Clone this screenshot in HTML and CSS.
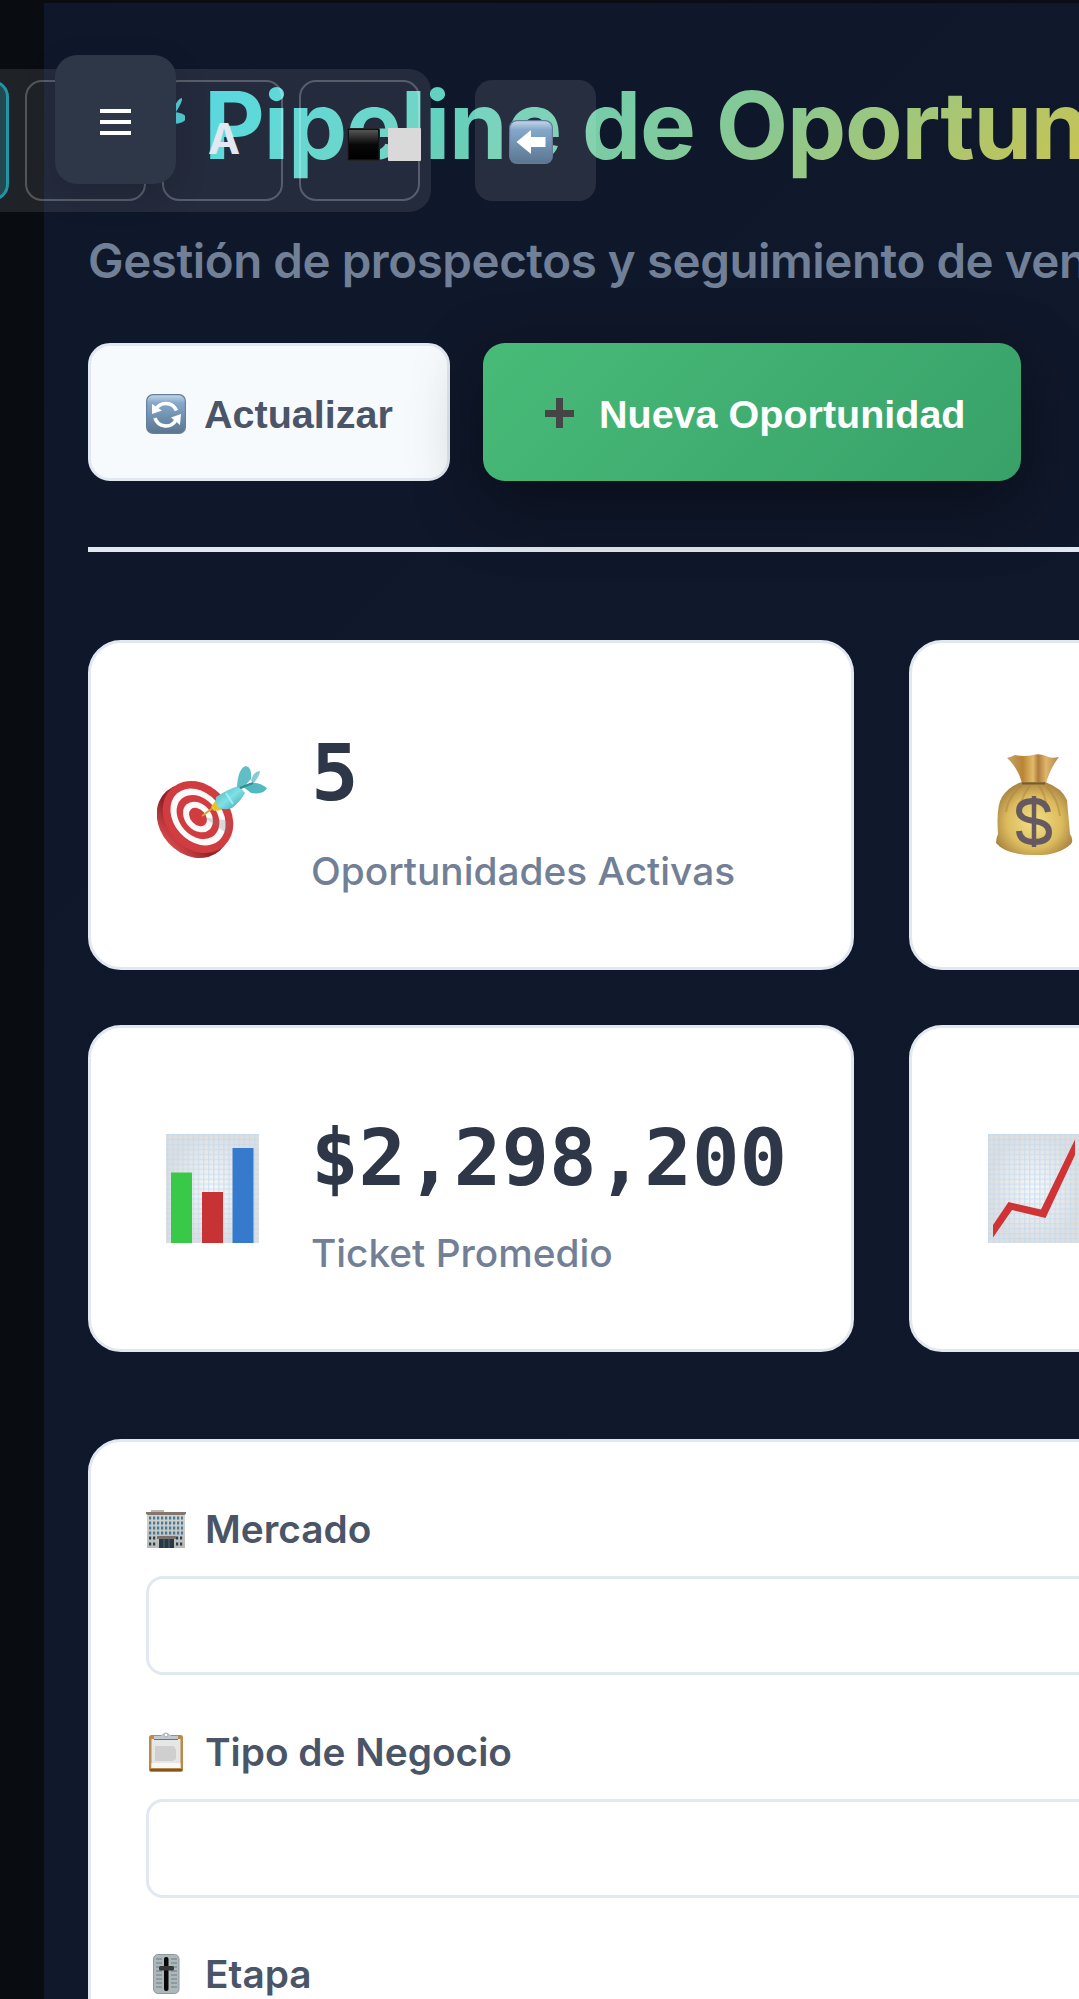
FILE: index.html
```
<!DOCTYPE html>
<html lang="es">
<head>
<meta charset="utf-8">
<title>Pipeline de Oportunidades</title>
<link rel="stylesheet" href="styles.css">
</head>
<body>
<svg class="defs" width="0" height="0" aria-hidden="true">
  <defs>
    <linearGradient id="key" x1="0" y1="0" x2="0" y2="1"><stop offset="0" stop-color="#c3d5e6"/><stop offset=".2" stop-color="#86a9cb"/><stop offset=".55" stop-color="#7192b2"/><stop offset="1" stop-color="#5c7690"/></linearGradient>
    <linearGradient id="jet" x1="0" y1="0" x2="0" y2="1"><stop offset="0" stop-color="#555"/><stop offset=".5" stop-color="#080808"/><stop offset="1" stop-color="#000"/></linearGradient>
    <radialGradient id="paper"><stop offset="0" stop-color="#f8f8f8"/><stop offset="1" stop-color="#dedede"/></radialGradient>
    <pattern id="grid" width="5.1" height="4.95" patternUnits="userSpaceOnUse"><path d="M.7 0V5M0 .7H5.1" stroke="#bddaf2" stroke-width="1" opacity=".8" fill="none"/></pattern>
    <radialGradient id="gold" cx=".5" cy=".55" r=".6"><stop offset="0" stop-color="#f3e083"/><stop offset=".6" stop-color="#dcbb5e"/><stop offset="1" stop-color="#a17a3d"/></radialGradient>
    <linearGradient id="neck"><stop offset="0" stop-color="#c9a36c"/><stop offset=".3" stop-color="#b98436"/><stop offset=".5" stop-color="#e0bc68"/><stop offset=".6" stop-color="#b07c3c"/><stop offset=".75" stop-color="#dfb66a"/><stop offset="1" stop-color="#b08754"/></linearGradient>
    <linearGradient id="dart" x1="0" y1="0" x2="1" y2="1"><stop offset="0" stop-color="#4db3ba"/><stop offset=".5" stop-color="#7fe0e6"/><stop offset="1" stop-color="#3b9aa4"/></linearGradient>
    <linearGradient id="rim"><stop offset="0" stop-color="#d9474b"/><stop offset=".35" stop-color="#8f2529"/><stop offset="1" stop-color="#b03034"/></linearGradient>
    <linearGradient id="wall" x1="0" y1="0" x2="0" y2="1"><stop offset="0" stop-color="#d8d4cc"/><stop offset="1" stop-color="#b9bab8"/></linearGradient>
  </defs>
</svg>

<main class="page">
  <header class="header">
    <h1 class="title"><svg class="title-icon" viewBox="0 0 97 80"><g fill="#45c9d3"><path d="M86 23Q90 13 94 13Q95 16 88 27Z"/><ellipse cx="85" cy="33" rx="13" ry="6"/></g></svg><span class="title-text">Pipeline de Oportunidades</span></h1>
    <p class="subtitle">Gestión de prospectos y seguimiento de ventas</p>
    <div class="actions">
      <button class="btn btn-light">
        <svg class="btn-icon" viewBox="0 0 40 40"><rect width="40" height="40" rx="7" fill="#64809d"/><rect x="1.2" y="1.2" width="37.6" height="37.6" rx="6" fill="url(#key)"/><g fill="none" stroke="#fff" stroke-width="3.6"><path d="M9.500 16A11.500 11.500 0 0 1 30.500 16.500"/><path d="M9 24A11.500 11.500 0 0 0 30 26"/></g><path d="M6 10L16 16.500L6 20ZM35 20L34 31L25 23.500Z" fill="#fff"/></svg>
        <span>Actualizar</span>
      </button>
      <button class="btn btn-green">
        <svg class="btn-icon" viewBox="0 0 40 40"><path d="M16 4h7v12h11v7H23v11h-7V23H5v-7h11z" fill="#454545"/></svg>
        <span>Nueva Oportunidad</span>
      </button>
    </div>
  </header>

  <section class="stats">
    <article class="stat">
      <svg class="stat-icon" viewBox="0 0 111 110">
        <ellipse cx="36" cy="71" rx="33" ry="40" transform="rotate(-42 36 71)" fill="url(#rim)"/>
        <g transform="rotate(-42 41 67)"><ellipse cx="41" cy="67" rx="32" ry="39" fill="#d13c41"/><ellipse cx="41" cy="67" rx="24" ry="31.500" fill="#fafafa"/><ellipse cx="41" cy="67" rx="18.500" ry="24.500" fill="#d13c41"/><ellipse cx="41" cy="67" rx="13" ry="17" fill="#fafafa"/><ellipse cx="41" cy="67" rx="7.500" ry="10.500" fill="#d13c41"/></g>
        <path d="M46 67L74 71L71 84L62 78Z" fill="#777" opacity=".25"/>
        <path d="M45 66L60 55" stroke="#d9a62a" stroke-width="2"/><path d="M54 57L59 50L65 60L57 61Z" fill="#e7c229"/>
        <path d="M59 47Q71 39 82 36L88 43Q83 52 75 58Q66 61 61 57Q58 51 59 47Z" fill="url(#dart)"/>
        <path d="M69 43L76 54" stroke="#9cf0f3" stroke-width="2"/>
        <path d="M80 37Q81 18 89 16Q95 17 94 29L85 39Z" fill="#60bec4"/><path d="M94 30Q97 21 103 21Q103 26 96 34Z" fill="#85cdd0"/><path d="M85 36Q99 29 110 38Q107 45 94 43Z" fill="#51b9c0"/><path d="M83 38L96 33" stroke="#348c95" stroke-width="2"/>
      </svg>
      <div class="stat-body"><div class="stat-value">5</div><div class="stat-label label-first">Oportunidades Activas</div></div>
    </article>
    <article class="stat">
      <svg class="stat-icon" viewBox="0 0 111 110">
        <path d="M29 8Q33 7 37 5Q47 7 55 5Q61 3 68 6Q73 9 81 7Q73 17 68 33H44Q40 18 29 8Z" fill="url(#neck)"/>
        <path d="M44 32H67Q84 38 89 50L92 84Q96 90 93 94Q80 106 56 105Q28 105 18 93Q18 88 20 84Q18 56 24 47Q31 36 44 32Z" fill="url(#gold)"/>
        <path d="M44 33.500H67" stroke="#765a37" stroke-width="2"/>
        <path d="M43 36Q30 47 28 62M52 36Q45 44 43 54M61 36Q66 43 68 52M69 37Q80 49 82 66" stroke="#ae8442" stroke-width="2" opacity=".5" fill="none"/>
        <path d="M56 46V97" stroke="#655a60" stroke-width="4.500"/><path d="M70 62Q68 51 56 51Q41 51 41 61Q41 69 56 71Q71 73 71 82Q71 92 56 92Q42 92 41 81" fill="none" stroke="#655a60" stroke-width="6"/>
      </svg>
      <div class="stat-body"></div>
    </article>
    <article class="stat">
      <svg class="stat-icon" viewBox="0 0 111 110"><rect x="9" y="0" width="93" height="109" fill="url(#paper)"/><rect x="9" y="0" width="93" height="109" fill="url(#grid)"/><path d="M14 38.500H35V109H14z" fill="#37c947"/><path d="M45 58H66V109H45z" fill="#c73335"/><path d="M75.500 14H96.500V109H75.500z" fill="#367ace"/></svg>
      <div class="stat-body"><div class="stat-value">$2,298,200</div><div class="stat-label">Ticket Promedio</div></div>
    </article>
    <article class="stat">
      <svg class="stat-icon" viewBox="0 0 111 110"><rect x="10" y="0" width="93" height="109" fill="url(#paper)"/><rect x="10" y="0" width="93" height="109" fill="url(#grid)"/><path d="M15 91L30.500 68L63 75.500L97 5.500V21L67.500 84L34 76L15 103.500Z" fill="#d03336"/></svg>
      <div class="stat-body"></div>
    </article>
  </section>

  <section class="filters">
    <div class="field">
      <label class="field-label"><svg class="field-icon" viewBox="0 0 40 40"><path d="M5 1H18V4H5z" fill="#bcb5b0"/><path d="M1 5H39V39H1z" fill="url(#wall)"/><path d="M0 3H40V5L38 6H2L0 5z" fill="#85766d"/><g stroke="#3f7ca0" stroke-width="3.200" stroke-dasharray="2.200 1.800"><path d="M3 9H37M3 14H37M3 19H37M3 24H37"/></g><path d="M3 29H10M3 35H10M30 29H38M30 35H38" stroke="#263f55" stroke-width="3.200" stroke-dasharray="2.200 1.800"/><path d="M11 27H30V30H11z" fill="#7b706c"/><path d="M13 30H28V39H13z" fill="#253a46"/><path d="M18 30V39M23 30V39" stroke="#5b6970"/></svg><span>Mercado</span></label>
      <div class="select"></div>
    </div>
    <div class="field">
      <label class="field-label"><svg class="field-icon" viewBox="0 0 40 40"><rect x="3" y="3" width="34" height="37" rx="2.500" fill="#ba8a48"/><path d="M4 37H36V39H4z" fill="#835523"/><path d="M5.500 7H34.500V36H5.500z" fill="#e6e6e6"/><path d="M5.500 31H34.500V36H5.500z" fill="#f8f8f8"/><path d="M9 14H28L30 18V27L27 29H9z" fill="#cfcfcf"/><path d="M8 4H15Q16 1 20 1Q24 1 25 4H32V7.500H8z" fill="#c3c9ce"/><path d="M8 7.500H32" stroke="#7b7066"/><circle cx="20" cy="3" r="2" fill="#fff" stroke="#9aa8b4"/></svg><span>Tipo de Negocio</span></label>
      <div class="select"></div>
    </div>
    <div class="field">
      <label class="field-label"><svg class="field-icon" viewBox="0 0 40 40"><rect x="7.500" y=".5" width="25.500" height="39" rx="4.500" fill="#adb8bb" stroke="#8e999c"/><path d="M10 5H16M10 9H16M10 13H16M10 17H16M10 21H16M10 25H16M10 29H16M10 33H16M25 5H31M25 9H31M25 13H31M25 17H31M25 21H31M25 25H31M25 29H31M25 33H31" stroke="#717e82" stroke-width="1.200"/><rect x="18" y="3" width="4.500" height="34" rx="2" fill="#090909"/><rect x="13" y="12" width="15" height="4.500" rx="1.500" fill="#343839"/></svg><span>Etapa</span></label>
      <div class="select"></div>
    </div>
  </section>
</main>

<nav class="toolbar">
  <button class="tool tool-active"></button>
  <button class="tool"></button>
  <button class="tool tool-contrast"><span class="tool-letter">A</span></button>
  <button class="tool tool-squares"><svg width="75" height="34" viewBox="0 0 75 34"><rect x=".5" y=".5" width="32" height="32" rx="1" fill="#111" stroke="#252525"/><rect x="2" y="2" width="29" height="29" fill="url(#jet)"/><rect x="41" y="0" width="33" height="33" rx="1" fill="#d9d9d9"/></svg></button>
</nav>
<button class="back"><svg width="44" height="44" viewBox="0 0 44 44"><rect width="44" height="44" rx="8" fill="#607c99"/><rect x="1.200" y="1.200" width="41.600" height="41.600" rx="7" fill="url(#key)"/><path d="M7.500 22L22 10V17H36.500V27H22V34Z" fill="#fff"/></svg></button>
<button class="menu"><svg width="31" height="27" viewBox="0 0 31 27"><path d="M0 0H31V4H0zM0 11H31V15H0zM0 22H31V26H0z" fill="#fff"/></svg></button>
</body>
</html>
```
FILE: styles.css
```
* { box-sizing: border-box; }
html, body { margin: 0; height: 1999px; overflow: hidden; }
body {
  position: relative;
  width: 1079px;
  padding: 3px 0 0 44px;
  background: linear-gradient(90deg, #090d11, #0a0e14);
  font-family: Inter, "Liberation Sans", sans-serif;
}
.defs { position: absolute; }
svg { display: block; flex: none; }
button { margin: 0; border: 0; padding: 0; font: inherit; }

.page {
  height: 1996px;
  overflow: hidden;
  padding: 66px 0 0 44px;
  background: linear-gradient(135deg, #0f172a, #10182a);
}
.header { padding-bottom: 66px; border-bottom: 5px solid #e2e8f0; }
.title {
  display: flex;
  align-items: center;
  gap: 19px;
  margin: 0;
  height: 112px;
  font-size: 94px;
  line-height: 112px;
  font-weight: 700;
  letter-spacing: -1.250px;
  white-space: nowrap;
}
.title-icon { width: 97px; height: 80px; }
.title-text {
  color: transparent;
  background: linear-gradient(135deg, #45d4df, #4fd6d6 70px, #8ac891 440px, #c6c455 680px, #e5bf3b 850px);
  -webkit-background-clip: text;
  background-clip: text;
}
.subtitle {
  margin: 44px 0 0;
  color: #718096;
  font-size: 47.500px;
  line-height: 72px;
  font-weight: 600;
  letter-spacing: -.45px;
  white-space: nowrap;
}
.actions { display: flex; gap: 33px; margin-top: 46px; }
.btn {
  display: flex;
  align-items: center;
  gap: 18px;
  height: 138px;
  border-radius: 22px;
  font: 700 39.500px/46px "Liberation Sans", Arial, sans-serif;
  white-space: nowrap;
}
.btn-icon { width: 40px; height: 40px; }
.btn-light { width: 362px; padding: 4px 0 0 55px; border: 3px solid #e2e8f0; background: #f7fafc; color: #4a5568; }
.btn-green { width: 538px; padding: 4px 0 0 57px; gap: 19px; background: linear-gradient(135deg, #48bb78, #38a169); color: #fff; box-shadow: 0 22px 69px rgba(0, 0, 0, .42); }

.stats {
  display: grid;
  grid-template-columns: 766px 766px;
  grid-template-rows: 330px 327px;
  gap: 55px;
  margin-top: 88px;
}
.stat {
  display: flex;
  align-items: center;
  gap: 43px;
  padding: 0 66px;
  border: 3px solid #e2e8f0;
  border-radius: 33px;
  background: #fff;
}
.stat-icon { width: 111px; height: 110px; }
.stat-body { padding-top: 7px; }
.stat-value { color: #2d3748; font: 700 79.100px/93px "DejaVu Sans Mono", monospace; }
.stat-label { margin-top: 28px; color: #718096; font-size: 38.800px; line-height: 40px; font-weight: 500; white-space: nowrap; }
.label-first { margin-top: 31px; }

.filters {
  display: flex;
  flex-direction: column;
  gap: 46.500px;
  width: 1587px;
  height: 800px;
  margin-top: 87px;
  padding: 57px 55px 0 54.500px;
  border: 3px solid #e2e8f0;
  border-radius: 33px;
  background: #fff;
}
.field-label { display: flex; align-items: center; gap: 19.500px; margin-bottom: 17px; color: #4a5568; font-size: 38.800px; line-height: 60px; font-weight: 600; white-space: nowrap; }
.field-icon { width: 40px; height: 40px; }
.select { height: 99px; border: 3px solid #e2e8f0; border-radius: 17px; background: #fff; }

.toolbar {
  position: absolute;
  top: 69px;
  right: 648px;
  display: flex;
  gap: 16px;
  padding: 11px;
  border-radius: 22px;
  background: rgba(255, 255, 255, .09);
}
.tool {
  display: flex;
  align-items: center;
  justify-content: center;
  width: 121px;
  height: 121px;
  border: 2px solid rgba(255, 255, 255, .24);
  border-radius: 17px;
  background: none;
}
.tool-active { border: 3px solid #2294a8; background: #224850; }
.tool-contrast { padding: 0 0 6px 3px; }
.tool-letter { color: #e2e8f0; font-size: 43px; line-height: 48px; font-weight: 700; }
.tool-squares { padding-left: 49px; padding-top: 8px; }
.back, .menu { position: absolute; display: flex; align-items: center; justify-content: center; }
.back { left: 475px; top: 80px; width: 121px; height: 121px; padding: 3px 9px 0 0; border-radius: 17px; background: rgba(255, 255, 255, .1); }
.menu { left: 55px; top: 55px; width: 121px; height: 129px; padding-top: 6px; border-radius: 22px; background: #2d3748; box-shadow: 0 11px 33px rgba(0, 0, 0, .15); }
```
